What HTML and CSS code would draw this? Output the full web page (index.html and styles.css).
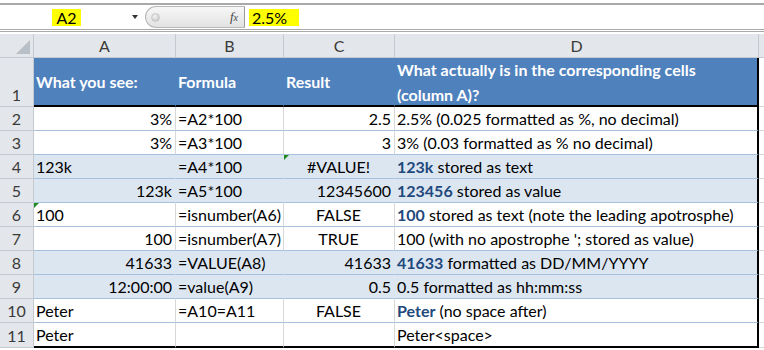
FILE: index.html
```html
<!DOCTYPE html>
<html lang="en">
<head>
  <meta charset="UTF-8" />
  <title>Text vs values</title>
  <link rel="stylesheet" href="styles.css">
</head>
<body>
  <div class="fbar">
    <div class="namebox"><span class="hl">A2</span><span class="drop"></span></div>
    <div class="fxzone"><span class="knob"></span><span class="fx">f<i>x</i></span></div>
    <div class="finput"><span class="hl">2.5%</span></div>
  </div>

  <div class="sheet">
    <div class="corner"><span class="tri"></span></div>
    <div class="ch">A</div>
    <div class="ch">B</div>
    <div class="ch">C</div>
    <div class="ch">D</div>
    <div class="ch ch-e"></div>

    <div class="rh">1</div>
    <div class="c hd">What you see:</div>
    <div class="c hd">Formula</div>
    <div class="c hd">Result</div>
    <div class="c hd wrap last">What actually is in the corresponding cells (column A)?</div>
    <div class="c e"></div>

    <div class="rh">2</div>
    <div class="c num">3%</div>
    <div class="c">=A2*100</div>
    <div class="c num">2.5</div>
    <div class="c last">2.5% (0.025 formatted as %, no decimal)</div>
    <div class="c e"></div>

    <div class="rh">3</div>
    <div class="c num">3%</div>
    <div class="c">=A3*100</div>
    <div class="c num">3</div>
    <div class="c last">3% (0.03 formatted as % no decimal)</div>
    <div class="c e"></div>

    <div class="rh">4</div>
    <div class="c band">123k</div>
    <div class="c band">=A4*100</div>
    <div class="c band ctr flag">#VALUE!</div>
    <div class="c band last"><b>123k</b>&nbsp;stored as text</div>
    <div class="c e"></div>

    <div class="rh">5</div>
    <div class="c band num">123k</div>
    <div class="c band">=A5*100</div>
    <div class="c band num">12345600</div>
    <div class="c band last"><b>123456</b>&nbsp;stored as value</div>
    <div class="c e"></div>

    <div class="rh">6</div>
    <div class="c flag">100</div>
    <div class="c">=isnumber(A6)</div>
    <div class="c ctr">FALSE</div>
    <div class="c last"><b>100</b>&nbsp;stored as text (note the leading apotrosphe)</div>
    <div class="c e"></div>

    <div class="rh">7</div>
    <div class="c num">100</div>
    <div class="c">=isnumber(A7)</div>
    <div class="c ctr">TRUE</div>
    <div class="c last">100 (with no apostrophe '; stored as value)</div>
    <div class="c e"></div>

    <div class="rh">8</div>
    <div class="c band num">41633</div>
    <div class="c band">=VALUE(A8)</div>
    <div class="c band num">41633</div>
    <div class="c band last"><b>41633</b>&nbsp;formatted as DD/MM/YYYY</div>
    <div class="c e"></div>

    <div class="rh">9</div>
    <div class="c band num">12:00:00</div>
    <div class="c band">=value(A9)</div>
    <div class="c band num">0.5</div>
    <div class="c band last">0.5 formatted as hh:mm:ss</div>
    <div class="c e"></div>

    <div class="rh">10</div>
    <div class="c">Peter</div>
    <div class="c">=A10=A11</div>
    <div class="c ctr">FALSE</div>
    <div class="c last"><b>Peter</b>&nbsp;(no space after)</div>
    <div class="c e"></div>

    <div class="rh">11</div>
    <div class="c bot">Peter</div>
    <div class="c bot"></div>
    <div class="c bot"></div>
    <div class="c bot last">Peter&lt;space&gt;</div>
    <div class="c e"></div>
  </div>
</body>
</html>
```

FILE: styles.css
```css
body {
  margin: 0;
  font-family: Lato, 'Liberation Sans', sans-serif;
  font-size: 16px;
  color: #000;
  background: #fff;
  width: 764px;
  height: 350px;
  overflow: hidden;
}

/* formula bar */
.fbar {
  margin-top: 3px;
  height: 24px;
  border-top: 2px solid #a9a9a9;
  border-bottom: 3px double #a9a9a9;
  display: flex;
}

.namebox {
  width: 145px;
  position: relative;
  display: flex;
  align-items: center;
  justify-content: center;
}

.namebox .hl {
  margin-left: -12px;
}

.hl {
  background: #ffff00;
  line-height: 17px;
  padding: 0 4px;
}

.drop {
  position: absolute;
  left: 132px;
  top: 10px;
  border-left: 3.5px solid transparent;
  border-right: 3.5px solid transparent;
  border-top: 4px solid #333;
}

.fxzone {
  width: 100px;
  margin: 1px 0;
  border: 1px solid #b8b8b8;
  border-right-color: #9a9a9a;
  border-radius: 11px 0 0 11px;
  background: linear-gradient(#f7f7f7, #e2e2e2);
  display: flex;
  align-items: center;
  justify-content: space-between;
  padding: 0 6px 0 5px;
  box-sizing: border-box;
}

.knob {
  width: 7px;
  height: 7px;
  border-radius: 50%;
  background: radial-gradient(circle at 40% 35%, #f4f4f4, #bcbcbc);
  border: 1px solid #c8c8c8;
}

.fx {
  font-family: 'Liberation Serif', serif;
  font-style: italic;
  font-size: 13px;
  color: #444;
}

.fx i {
  font-size: 10px;
}

.finput {
  flex: 1;
  display: flex;
  align-items: center;
  padding-left: 4px;
}

.finput .hl {
  padding: 0 4px 0 3px;
  width: 43px;
}

/* sheet grid */
.sheet {
  margin-top: 2px;
  display: grid;
  grid-template-columns: 34px 142px 108px 111px 364px 5px;
  grid-template-rows: 24px 49px repeat(9, 24px) 25px;
}

.corner,
.ch,
.rh {
  background: #e3e6ea;
  color: #3a3a3a;
  box-sizing: border-box;
}

.corner {
  border-right: 1px solid #c5cad1;
  border-bottom: 1px solid #c5cad1;
  position: relative;
}

.tri {
  position: absolute;
  right: 3px;
  bottom: 3px;
  border-left: 14px solid transparent;
  border-bottom: 14px solid #b9bfc6;
}

.ch {
  border-right: 1px solid #c5cad1;
  border-bottom: 1px solid #c5cad1;
  display: flex;
  align-items: center;
  justify-content: center;
}

.ch-e {
  border-right: none;
}

.rh {
  border-right: 1px solid #c5cad1;
  border-bottom: 1px solid #c5cad1;
  display: flex;
  align-items: flex-end;
  justify-content: center;
  line-height: 20px;
  padding-bottom: 1px;
}

.c {
  box-sizing: border-box;
  border-right: 1px solid #d8d8d8;
  border-bottom: 1px solid #a7c0de;
  padding: 0 3px 1px 2px;
  display: flex;
  align-items: flex-end;
  line-height: 20px;
  white-space: nowrap;
  position: relative;
}

.c b {
  color: #1f497d;
}

.num {
  justify-content: flex-end;
}

.ctr {
  justify-content: center;
}

.band {
  background: #dce6f1;
  border-right-color: #dce6f1;
}

.hd {
  background: #4f81bd;
  border-right-color: #4f81bd;
  border-bottom: 2px solid #000;
  color: #fff;
  font-weight: bold;
  align-items: center;
  padding-bottom: 0;
}

.wrap {
  white-space: normal;
  line-height: 25px;
}

.last {
  border-right: 2px solid #000;
}

.bot {
  border-bottom: 2px solid #000;
}

.e {
  border-right: none;
  border-bottom: 1px solid #d8d8d8;
}

.flag::before {
  content: "";
  position: absolute;
  left: 0;
  top: 0;
  border-top: 5px solid #1f8a1f;
  border-right: 5px solid transparent;
}
```
